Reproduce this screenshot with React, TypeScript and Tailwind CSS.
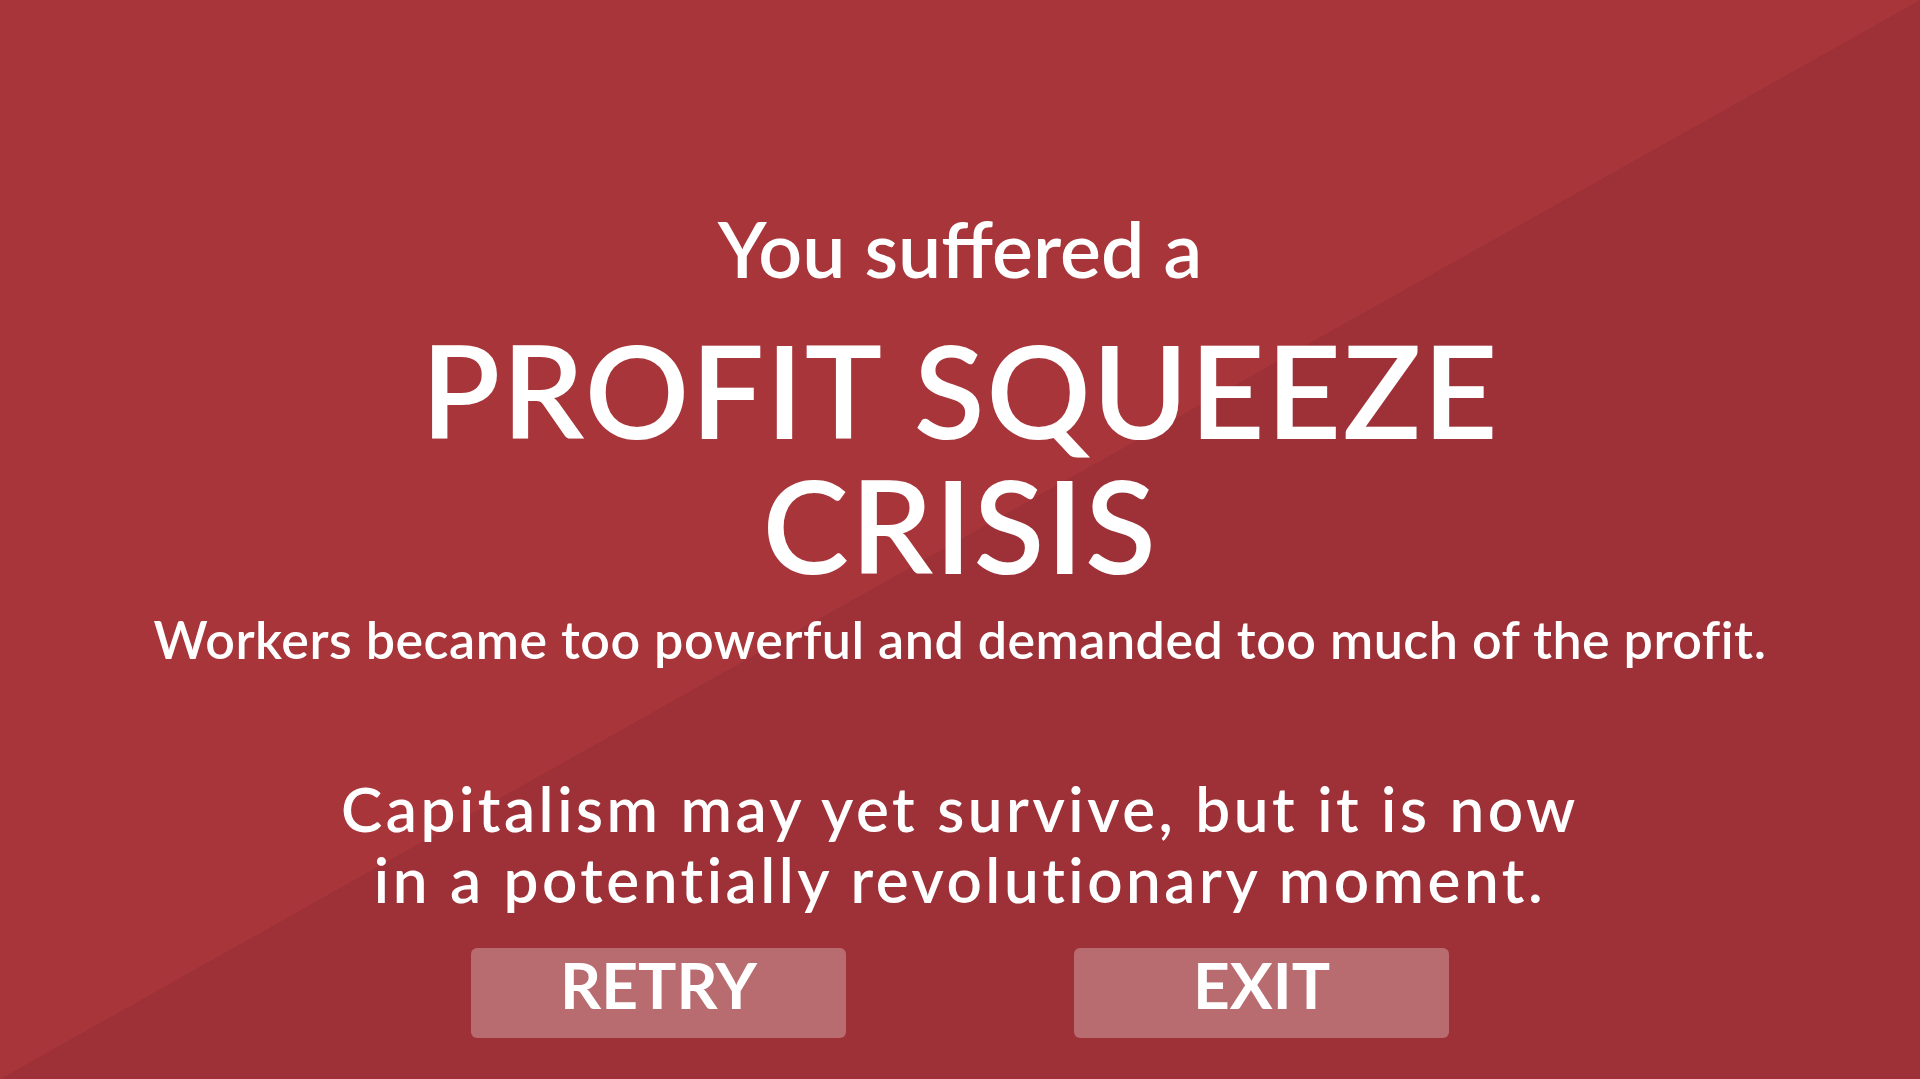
export default function App() {
  return (
    <div className="w-full h-[1079px] overflow-hidden bg-[linear-gradient(to_bottom_right,#a8353a_50%,#9e3138_50%)] flex flex-col items-center text-center text-white [font-family:Lato,'Open_Sans',sans-serif]">
      <p className="mt-[210px] text-[77px] leading-[77px] font-semibold">You suffered a</p>
      <h1 className="mt-[35px] text-[130px] leading-[135px] font-semibold tracking-[1.5px]">
        PROFIT SQUEEZE
        <br />
        CRISIS
      </h1>
      <p className="mt-[21px] text-[52px] leading-[52px] font-semibold tracking-[0.5px]">
        Workers became too powerful and demanded too much of the profit.
      </p>
      <p className="mt-[108px] text-[62px] leading-[71px] font-semibold tracking-[3.5px]">
        Capitalism may yet survive, but it is now
        <br />
        in a potentially revolutionary moment.
      </p>
      <div className="mt-[33px] flex gap-[228px]">
        <button className="w-[375px] h-[90px] pb-[16px] rounded-md bg-[#b96c70] text-[64px] leading-[64px] font-bold text-white">
          RETRY
        </button>
        <button className="w-[375px] h-[90px] pb-[16px] rounded-md bg-[#b96c70] text-[64px] leading-[64px] font-bold text-white">
          EXIT
        </button>
      </div>
    </div>
  );
}
